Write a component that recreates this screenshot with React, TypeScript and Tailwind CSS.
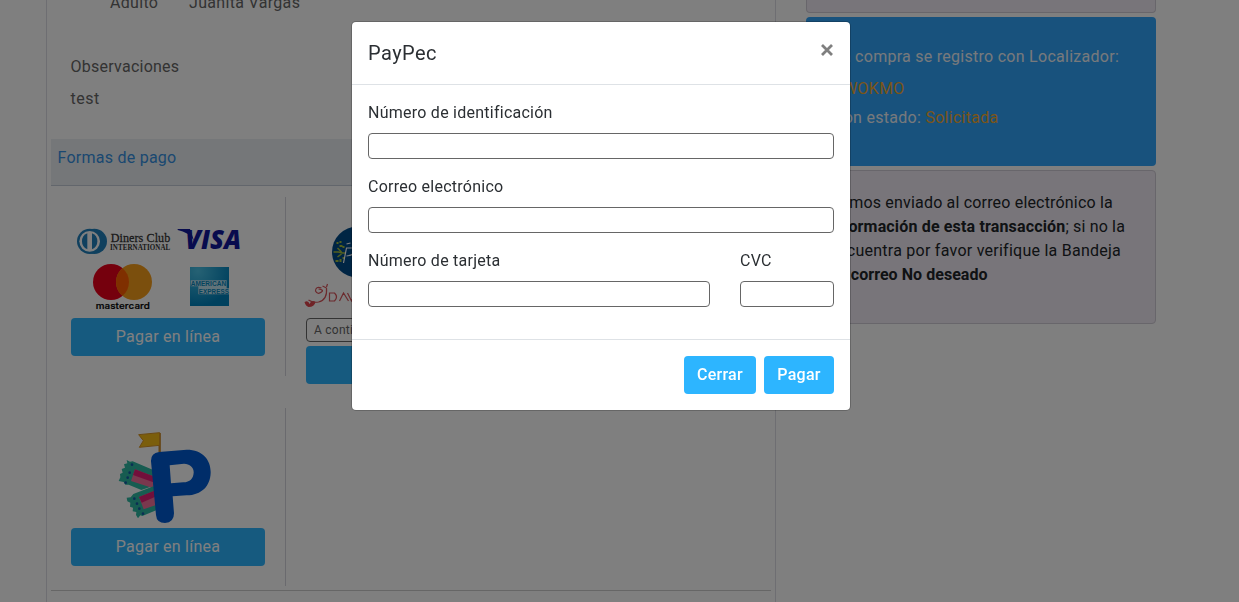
import type { ReactNode } from 'react';

function CardLogos() {
  return (
    <svg className="block w-full h-[121px]" viewBox="33 -39 582 363">
      {/* Diners Club */}
      <circle cx="103" cy="94" r="38" fill="#2080bd" />
      <circle cx="89" cy="94" r="38" fill="#2080bd" />
      <circle cx="89" cy="94" r="31" fill="#fff" />
      <path d="M82 70 A26 26 0 0 0 82 118 Z" fill="#2080bd" />
      <path d="M96 70 A26 26 0 0 1 96 118 Z" fill="#2080bd" />
      <g fontFamily="Liberation Serif, serif" fill="#333">
        <text x="152" y="95" fontSize="39" stroke="#333" strokeWidth="0.8" textLength="179" lengthAdjust="spacingAndGlyphs">Diners Club</text>
        <text x="150" y="121" fontSize="24" fontWeight="bold" textLength="181" lengthAdjust="spacingAndGlyphs">INTERNATIONAL</text>
      </g>
      {/* Visa */}
      <text x="376" y="116" fontSize="81" fontWeight="800" fontStyle="italic" fontFamily="Open Sans, sans-serif" fill="#11189c" textLength="168" lengthAdjust="spacingAndGlyphs">VISA</text>
      <path d="M353 57 H390 L402 92 Q386 66 353 60 Z" fill="#11189c" />
      {/* Mastercard */}
      <circle cx="153" cy="216" r="54" fill="#eb001b" />
      <circle cx="222" cy="216" r="54" fill="#f79e1b" />
      <path d="M187.500 174.500 A54 54 0 0 1 187.500 257.500 A54 54 0 0 1 187.500 174.500 Z" fill="#ff5f00" />
      <text x="107" y="297" fontSize="27" fontWeight="500" fontFamily="Inter, sans-serif" fill="#000" stroke="#000" strokeWidth="0.6" textLength="163" lengthAdjust="spacingAndGlyphs">mastercard</text>
      {/* American Express */}
      <defs>
        <radialGradient id="amex" cx="0.2" cy="0.1" r="0.9">
          <stop offset="0" stopColor="#4cc4e8" />
          <stop offset="1" stopColor="#0082bd" />
        </radialGradient>
      </defs>
      <rect x="390" y="171" width="117" height="117" fill="url(#amex)" />
      <path d="M392 211 H500 V235 H507 V253 H415 V229 H392 Z" fill="#c3e6f3" />
      <g fontFamily="Liberation Sans, sans-serif" fontWeight="bold" fill="#0788bd" fontSize="20">
        <text x="392" y="228" textLength="107" lengthAdjust="spacingAndGlyphs">AMERICAN</text>
        <text x="416" y="251" textLength="91" lengthAdjust="spacingAndGlyphs">EXPRESS</text>
      </g>
    </svg>
  );
}

function BankLogos() {
  return (
    <svg className="block w-full h-[121px]" viewBox="306 197 194 121" overflow="visible">
      <circle cx="357" cy="252" r="25.500" fill="#004a88" />
      <g fill="none" stroke="#a5bf3d" strokeWidth="1.500">
        <path d="M333 252 H338 L342 253 H345 M337 248 L341 252 M337 257 L341 254" />
        <path d="M336 243 H338 M340 241 V243 M339 246 H342 M335 261 H338 M340 259 V262 M343 246 V248 M342 258 H344" strokeWidth="2" />
      </g>
      <path d="M343 263 L346 248 H355 Q356 255 346 256 M346 244 L350 243" fill="none" stroke="#fff" strokeWidth="1.200" />
      <path d="M304 302 Q308 300 309 304 Q311 299 315 302 Q314 307 308 307 Q305 306 304 302 Z" fill="#e0454c" />
      <g fill="none" stroke="#d8545a" strokeWidth="1.200">
        <path d="M308 300 Q312 303 318 302 Q327 300 326 288 M326 288 L322 286 M326 287 L327 284 M321 288 Q315 286 315 291 Q317 295 321 292 Q324 290 318 289" />
        <path d="M329 293 H334 Q338 297 334 301 H329 Z M339 301 L343 293 L348 301 M347 293 L351 301 L355 293" />
      </g>
    </svg>
  );
}

function PayPecLogo() {
  return (
    <svg className="block w-full h-[120px]" viewBox="33 24 582 360">
      <path d="M299 156 V99" stroke="#c9882b" strokeWidth="7" />
      <path d="M236 104 L299 98 V136 L238 142 L250 122 Z" fill="#f7bd18" stroke="#d99422" strokeWidth="3" />
      {/* tickets */}
      <path d="M200 180 L210 185 L218 184 L278 209 L288 255 L244 270 L206 254 L196 254 L191 246 L176 243 L181 232 L180 222 L188 218 L185 207 L195 203 L192 193 L202 190 Z" fill="#2eb8a2" />
      <path d="M225 208 L280 229 V265 L213 243 Z" fill="#f5709c" />
      <path d="M225 208 L280 229 V247 L219 225 Z" fill="#e51f77" />
      <path d="M200 293 L212 292 L220 282 L284 257 L292 329 L247 348 L241 346 L234 355 L228 345 L229 336 L218 334 L219 323 L210 320 L211 308 L202 304 Z" fill="#2eb8a2" />
      <path d="M237 291 L283 272 L288 315 L251 328 Z" fill="#f5709c" />
      <path d="M237 291 L283 272 L286 290 L245 308 Z" fill="#e51f77" />
      <g fill="#155da8">
        <circle cx="216" cy="194" r="4" />
        <circle cx="209" cy="218" r="4" />
        <circle cx="203" cy="233" r="4" />
        <circle cx="197" cy="248" r="4" />
        <circle cx="223" cy="296" r="4" />
        <circle cx="231" cy="311" r="4" />
        <circle cx="238" cy="326" r="4" />
        <circle cx="249" cy="341" r="4" />
      </g>
      <path
        fillRule="evenodd"
        fill="#005bd2"
        d="M273 184 Q272 159 297 156 L380 149 C430 149 453 182 452 218 C451 258 425 285 380 286 L338 289 L342 340 Q342 368 315 369 Q290 369 288 345 Z M329 196 L372 191 C390 192 402 202 401 218 C400 236 390 246 370 247 L333 250 Z"
      />
    </svg>
  );
}

function Field({ label, className = '' }: { label: string; className?: string }) {
  return (
    <label className={`block mb-4 ${className}`}>
      <span className="block leading-6 mb-2">{label}</span>
      <input className="block w-full h-[26px] border border-[#666] rounded bg-white" />
    </label>
  );
}

function Button({ children, className = '' }: { children: ReactNode; className?: string }) {
  return (
    <button className={`block h-[38px] rounded bg-[#2db5ff] text-white ${className}`}>{children}</button>
  );
}

export default function App() {
  return (
    <div className="h-screen overflow-hidden bg-white font-[Roboto,sans-serif] text-base text-[#2b2f33] tracking-[0.25px]">
      <div className="flex items-start pl-[46px]">
        {/* Reservation details */}
        <main className="w-[730px] h-[602px] shrink-0 border-x border-[#dcdce4] px-1 text-[#666]">
          <div className="flex -mt-[9px] pl-[59px] leading-6 tracking-[0.32px]">
            <span className="w-[79px]">Adulto</span>
            <span>Juanita Vargas</span>
          </div>
          <div className="pl-[19.5px] pt-10 leading-6">
            <p className="mb-2">Observaciones</p>
            <p className="tracking-[0.5px]">test</p>
          </div>
          <h2 className="mt-7 h-[47px] pl-[6.5px] pt-[7px] bg-[#ebeef2] border-b border-[#c5cdd8] leading-6 text-[#3591e2]">
            Formas de pago
          </h2>
          <div className="border-b border-[#ccc] h-[405px] pt-[11px]">
            <div className="flex items-start h-[211px]">
              <div className="w-[235px] h-[179px] px-5 border-r border-[#d5d5dd]">
                <CardLogos />
                <Button className="w-[194px]">Pagar en línea</Button>
              </div>
              <div className="w-[235px] px-5">
                <BankLogos />
                <div className="h-6 mb-1 px-[7px] border border-[#666] rounded text-[12px] leading-[22px]">
                  A continuación
                </div>
                <Button className="w-full">Pagar en línea</Button>
              </div>
            </div>
            <div className="w-[235px] h-[178px] px-5 border-r border-[#d5d5dd]">
              <PayPecLogo />
              <Button className="w-[194px]">Pagar en línea</Button>
            </div>
          </div>
        </main>

        {/* Purchase status */}
        <aside className="w-[350px] ml-[30px] shrink-0">
          <div className="h-[13px] mb-1 rounded-b border border-t-0 border-[#d0ccd6] bg-[#f0ebf4]" />
          <div className="h-[149px] mb-1 pl-[27px] pt-7 rounded bg-[#30a4fa] text-[#eef3f8] whitespace-nowrap">
            <p className="leading-6 mb-2 tracking-[0.27px]">La compra se registro con Localizador:</p>
            <p className="leading-6 mb-[5px] text-[#f5aa30] tracking-[0.25px]">AWOKMO</p>
            <p className="leading-6 tracking-[0.28px]">
              Con estado: <span className="text-[#f5aa30]">Solicitada</span>
            </p>
          </div>
          <div className="h-[154px] pl-[22px] pt-5 rounded border border-[#d0ccd6] bg-[#f0ebf4] leading-6 text-[#212529] tracking-[0.18px] whitespace-nowrap">
            <p>Hemos enviado al correo electrónico la</p>
            <p className="tracking-[0.16px]"><b>información de esta transacción</b>; si no la</p>
            <p className="tracking-[0.25px]">encuentra por favor verifique la Bandeja</p>
            <p className="tracking-[0.05px]"><b>de correo No deseado</b></p>
          </div>
        </aside>
      </div>

      {/* Payment dialog */}
      <div className="fixed inset-0 flex items-start justify-center bg-black/50 pt-[22px] pr-[37px]">
        <div className="w-[498px] rounded bg-white ring-1 ring-black/20" role="dialog">
          <div className="flex items-start justify-between p-4 border-b border-[#dee2e6]">
            <h5 className="text-xl leading-[30px] tracking-[0.45px]">PayPec</h5>
            <button aria-label="Close" className="mt-[5px]">
              <svg className="block" width="14" height="14" viewBox="0 0 14 14" stroke="#7f7f7f" strokeWidth="2.800">
                <path d="M2 2 L12 12 M12 2 L2 12" />
              </svg>
            </button>
          </div>
          <div className="p-4">
            <Field label="Número de identificación" />
            <Field label="Correo electrónico" />
            <div className="flex gap-[30px]">
              <Field label="Número de tarjeta" className="w-[342px]" />
              <Field label="CVC" className="w-[94px]" />
            </div>
          </div>
          <div className="flex justify-end gap-2 p-4 border-t border-[#dee2e6]">
            <Button className="w-[72px] font-medium">Cerrar</Button>
            <Button className="w-[70px] font-medium">Pagar</Button>
          </div>
        </div>
      </div>
    </div>
  );
}
